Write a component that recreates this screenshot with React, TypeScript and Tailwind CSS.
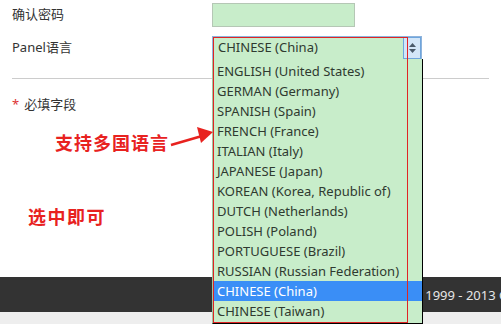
import React from 'react';

const languages = [
  'ENGLISH (United States)',
  'GERMAN (Germany)',
  'SPANISH (Spain)',
  'FRENCH (France)',
  'ITALIAN (Italy)',
  'JAPANESE (Japan)',
  'KOREAN (Korea, Republic of)',
  'DUTCH (Netherlands)',
  'POLISH (Poland)',
  'PORTUGUESE (Brazil)',
  'RUSSIAN (Russian Federation)',
  'CHINESE (China)',
  'CHINESE (Taiwan)',
];

const selected = 'CHINESE (China)';

function SpinButton() {
  return (
    <div className="flex h-full w-[18px] flex-col items-center justify-center gap-[2px] border border-[#6fa5dc] bg-[#d3e6f8]">
      <svg width="7" height="4" viewBox="0 0 7 4">
        <path d="M0 4L3.5 0L7 4Z" fill="#4a5a6a" />
      </svg>
      <svg width="7" height="4" viewBox="0 0 7 4">
        <path d="M0 0L3.5 4L7 0Z" fill="#4a5a6a" />
      </svg>
    </div>
  );
}

function LanguageList() {
  return (
    <ul className="absolute left-[212px] top-[59px] h-[265px] w-[211px] border-b border-l border-r border-b-black border-l-[#9fc4a0] border-r-black bg-[#c8edca] pt-[2px]">
      {languages.map((lang) => (
        <li
          key={lang}
          className={
            lang === selected
              ? 'h-[20px] bg-[#3a8ef6] pl-[4px] leading-[20px] text-white'
              : 'h-[20px] pl-[4px] leading-[20px] text-[#2f3a30]'
          }
        >
          {lang}
        </li>
      ))}
    </ul>
  );
}

function Annotations() {
  return (
    <>
      <div className="pointer-events-none absolute left-[213px] top-[37px] h-[286px] w-[195px] border border-[#e02424]" />
      <div className="absolute left-[55px] top-[131px] text-[18px] font-bold leading-[22px] tracking-[1px] text-[#e8221f] [font-family:'Noto_Sans_CJK_SC',serif]">
        支持多国语言
      </div>
      <svg className="absolute left-[168px] top-[124px]" width="48" height="26" viewBox="0 0 48 26">
        <line x1="3" y1="21" x2="34" y2="12" stroke="#e8221f" strokeWidth="2.5" />
        <path d="M45 8L29 3L33 19Z" fill="#e8221f" />
      </svg>
      <div className="absolute left-[28px] top-[205px] text-[18px] font-bold leading-[22px] tracking-[1.5px] text-[#e8221f] [font-family:'Noto_Sans_CJK_SC',serif]">
        选中即可
      </div>
    </>
  );
}

export default function App() {
  return (
    <div className="relative flex h-[324px] w-[501px] flex-col overflow-hidden bg-white text-[13px] text-[#333] [font-family:'Noto_Sans','Noto_Sans_CJK_SC',sans-serif]">
      <div className="flex flex-col gap-[9px] px-3 pt-[3px]">
        <div className="flex h-[24px] items-center">
          <label className="w-[200px]">确认密码</label>
          <div className="h-[24px] w-[143px] border border-[#b5c7b5] bg-[#c8edca]" />
        </div>
        <div className="flex h-[24px] items-center">
          <label className="w-[200px]">Panel语言</label>
          <div className="flex h-[24px] w-[210px] items-center justify-between border border-[#8fb4dc] bg-[#c8edca] pl-[5px]">
            <span className="text-[#2f3a30]">CHINESE (China)</span>
            <SpinButton />
          </div>
        </div>
      </div>

      <hr className="mx-3 mt-[18px] border-t border-[#cccccc]" />

      <div className="mt-[15px] flex items-center px-3 leading-[20px]">
        <span className="mr-[5px] text-[#d33]">*</span>
        <span>必填字段</span>
      </div>

      <div className="flex-1" />

      <footer className="flex h-[35px] items-center whitespace-nowrap bg-[#333333] pl-[411px] pt-[3px] text-[13px] text-[#e6e6e6]">
        © 1999 - 2013 G
      </footer>
      <div className="h-[12px] bg-[#eeeeee]" />

      <LanguageList />
      <Annotations />
    </div>
  );
}
